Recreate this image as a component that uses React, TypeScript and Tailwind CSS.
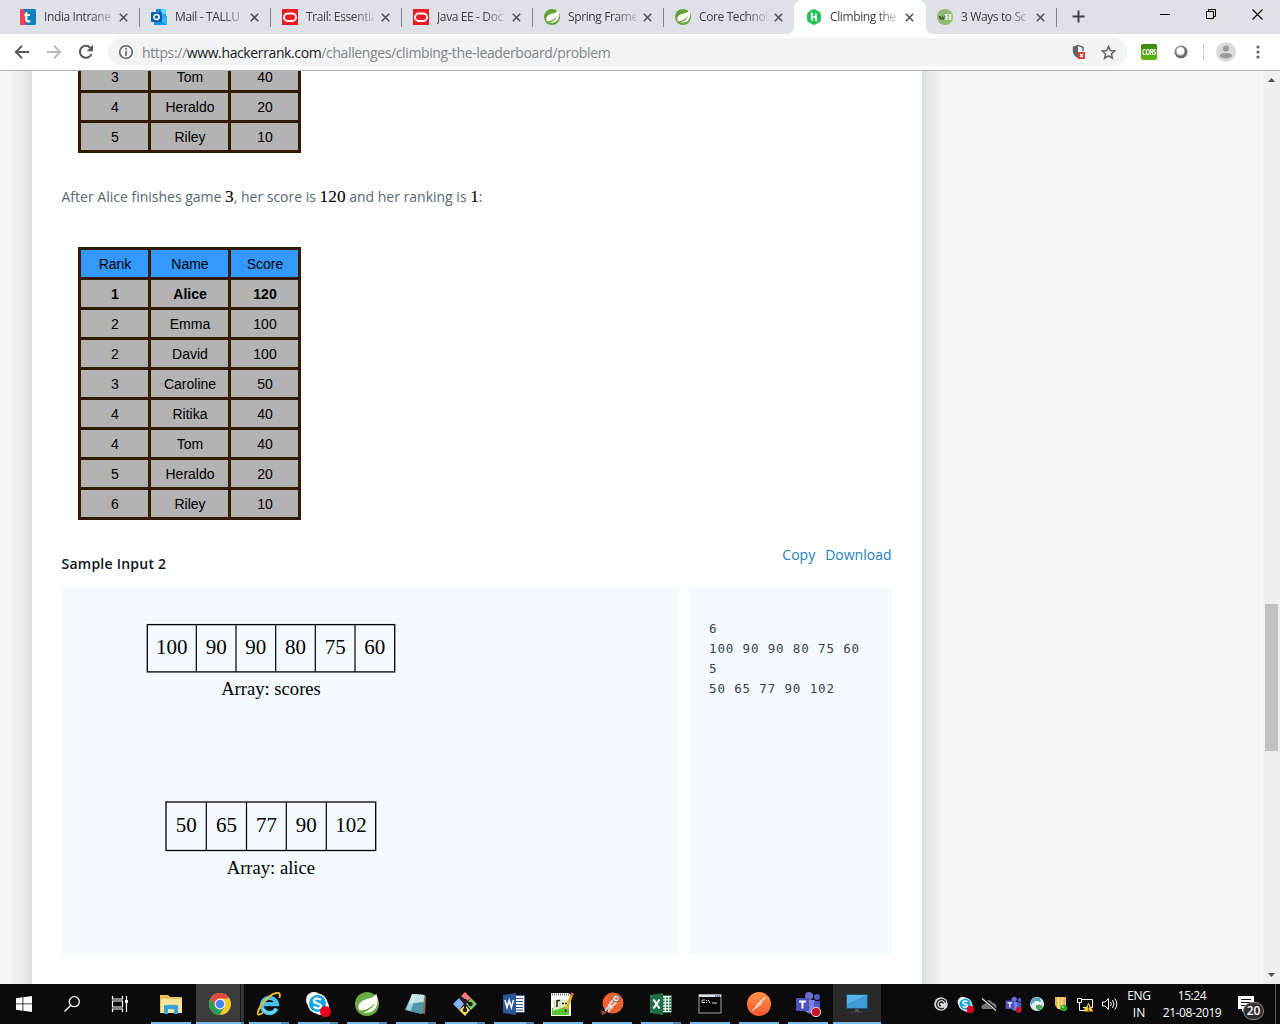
import React from "react";

function TealIcon() {
  return (
    <svg width="16" height="16" viewBox="0 0 16 16">
      <rect width="16" height="16" rx="1.5" fill="#0d7fba" />
      <path d="M0 1.500Q0 0 1.500 0H4L6 16H1.500Q0 16 0 14.500Z" fill="#f2405d" />
      <path d="M6.300 3.300V10.300Q6.300 12.300 8.300 12.300H10.300M4.500 6H10" stroke="#fff" strokeWidth="2.200" fill="none" />
    </svg>
  );
}

function OutlookIcon() {
  return (
    <svg width="17" height="16" viewBox="0 0 17 16">
      <path d="M5 0H15V10H5Z" fill="#28a8ea" />
      <path d="M10 0H15V5H10Z" fill="#50d9ff" />
      <path d="M5 0H10V5H5Z" fill="#1487d6" />
      <path d="M5 5H10V10H5Z" fill="#0364b8" />
      <path d="M3 8L10 12L16 7V16H3Z" fill="#1490df" />
      <path d="M16 7V16L8 11.500Z" fill="#35b8f1" />
      <rect x="0" y="3" width="11" height="10" rx="1" fill="#0a5fb4" />
      <circle cx="5.500" cy="8" r="2.500" fill="none" stroke="#fff" strokeWidth="1.700" />
    </svg>
  );
}

function OracleIcon() {
  return (
    <svg width="16" height="16" viewBox="0 0 16 16">
      <rect width="16" height="16" fill="#ee1c25" />
      <rect x="2" y="4.500" width="12" height="7.500" rx="3.700" fill="none" stroke="#fff" strokeWidth="1.900" />
    </svg>
  );
}

function SpringLeaf({ size, color }: { size: number; color: string }) {
  return (
    <svg width={size} height={size} viewBox="0 0 24 24" className="shrink-0">
      <circle cx="12" cy="12" r="12" fill={color} />
      <path d="M21.300 1.800C17.500 7.500 12 6 7.500 8.800C2.800 11.700 2.500 16.500 5 19.300C10 21.500 17 21.500 20.500 16.300C23.500 11.600 22.800 6.200 21.300 1.800Z" fill="#fff" />
      <path d="M3.800 18.800C10.500 18.500 16.500 15.500 20 10.200C18 16.300 11.800 20.300 5.800 20.400Z" fill={color} />
      <circle cx="4.800" cy="19.500" r="1.300" fill={color} />
    </svg>
  );
}

function SpringTabIcon() {
  return <SpringLeaf size={16} color="#62a237" />;
}

function HackerIcon() {
  return (
    <svg width="16" height="16" viewBox="0 0 16 16">
      <path d="M8 0Q8.800 0 14 3.200Q15 3.900 15 8T14 12.800Q8.800 16 8 16T2 12.800Q1 12.100 1 8T2 3.200Q7.200 0 8 0Z" fill="#27c15a" />
      <path d="M6 4V11.500M10 4.500V12M6 8H10M4.800 4.700H6M10 11.300H11.200" stroke="#fff" strokeWidth="1.700" fill="none" />
    </svg>
  );
}

function WikiIcon() {
  return (
    <span className="flex size-4 items-center justify-center rounded-full bg-[#93b874] font-['Liberation_Serif',serif] text-[9px] font-bold leading-none tracking-[-0.5px]">
      <span className="text-[#2e3d22]">w</span>
      <span className="text-white">H</span>
    </span>
  );
}

const tabs = [
  { title: "India Intrane", Icon: TealIcon },
  { title: "Mail - TALLU", Icon: OutlookIcon },
  { title: "Trail: Essentia", Icon: OracleIcon },
  { title: "Java EE - Doc", Icon: OracleIcon },
  { title: "Spring Frame", Icon: SpringTabIcon },
  { title: "Core Technol", Icon: SpringTabIcon },
  { title: "Climbing the", Icon: HackerIcon, active: true },
  { title: "3 Ways to Sc", Icon: WikiIcon },
];

function Tab({ tab, line }: { tab: (typeof tabs)[number]; line: boolean }) {
  const { title, Icon, active } = tab;
  return (
    <div
      className={
        active
          ? "relative -ml-px flex h-[34px] w-[132px] items-center rounded-t-lg bg-white pl-3"
          : "relative flex h-[34px] w-[131px] items-center pl-[11px]"
      }
    >
      {active && (
        <>
          <svg className="absolute -left-2 bottom-0" width="8" height="8"><path d="M8 0V8H0Q8 8 8 0Z" fill="#fff" /></svg>
          <svg className="absolute -right-2 bottom-0" width="8" height="8"><path d="M0 0V8H8Q0 8 0 0Z" fill="#fff" /></svg>
        </>
      )}
      <span className="flex w-[24px] shrink-0"><Icon /></span>
      <span className="w-[68px] shrink-0 whitespace-nowrap text-[12px] tracking-[-0.38px] text-[#3c4043] [mask-image:linear-gradient(to_right,#000_68%,#0003)]">
        {title}
      </span>
      <svg className="ml-[7px] shrink-0" width="9" height="9" viewBox="0 0 9 9">
        <path d="M0.800 0.800L8.200 8.200M8.200 0.800L0.800 8.200" stroke="#505458" strokeWidth="1.600" />
      </svg>
      {line && <span className="absolute right-0 top-[8px] h-[19px] w-px bg-[#808387]" />}
    </div>
  );
}

function TabStrip() {
  return (
    <div className="flex h-[34px] bg-[#dee1e6] pl-[9px]">
      {tabs.map((t, i) => (
        <Tab key={t.title} tab={t} line={i < 5 || i === 7} />
      ))}
      <svg className="ml-[15px] mt-[10px]" width="13" height="13" viewBox="0 0 13 13">
        <path d="M6.500 0.500V12.500M0.500 6.500H12.500" stroke="#3c4043" strokeWidth="2" />
      </svg>
      <div className="ml-auto flex items-start pr-[17px] pt-[9px]">
        <svg width="10" height="10" className="mr-[36px]"><path d="M0 5.500H10" stroke="#000" /></svg>
        <svg width="10" height="10" className="mr-[36px]">
          <path d="M0.500 2.500H7.500V9.500H0.500ZM2.500 2.500V0.500H9.500V7.500H7.500" fill="none" stroke="#000" />
        </svg>
        <svg width="11" height="11"><path d="M0.500 0.500L10.500 10.500M10.500 0.500L0.500 10.500" stroke="#000" strokeWidth="1.100" /></svg>
      </div>
    </div>
  );
}

function Toolbar() {
  return (
    <div className="flex h-[37px] items-center border-b border-[#b6b4b6] bg-white pl-[14px]">
      <svg width="16" height="16" viewBox="0 0 16 16" fill="none" stroke="#54585d" strokeWidth="1.900">
        <path d="M15 8H2.500M8 1.800L1.800 8L8 14.200" />
      </svg>
      <svg className="ml-[16px]" width="16" height="16" viewBox="0 0 16 16" fill="none" stroke="#babcbe" strokeWidth="1.900">
        <path d="M1 8H13.500M8 1.800L14.200 8L8 14.200" />
      </svg>
      <svg className="ml-[16px]" width="16" height="16" viewBox="0 0 16 16">
        <path d="M13.500 10A6 6 0 1 1 12.400 3.800" fill="none" stroke="#54585d" strokeWidth="2" />
        <path d="M15 0.800V7.200H8.600Z" fill="#54585d" />
      </svg>
      <div className="ml-[14px] flex h-7 w-[1019px] items-center rounded-full bg-[#f1f3f4] pl-[10px]">
        <svg width="16" height="16" viewBox="0 0 16 16" fill="none" stroke="#5f6368" strokeWidth="1.600">
          <circle cx="8" cy="8" r="6.300" />
          <path d="M8 7V12M8 4V5.700" />
        </svg>
        <span className="ml-[8px] whitespace-nowrap text-[14px] tracking-[-0.38px] text-[#80868b]">
          https://<span className="text-[#202124]">www.hackerrank.com</span>/challenges/climbing-the-leaderboard/problem
        </span>
        <svg className="ml-auto" width="15" height="16" viewBox="0 0 15 16">
          <path d="M6 0.800L0.800 2.700V7Q0.800 11.500 6 14Z" fill="#5f6368" />
          <path d="M6 1.300L11 3.300V7" fill="none" stroke="#5f6368" strokeWidth="1.400" />
          <rect x="6" y="8" width="7" height="7" fill="#dd3b31" />
          <path d="M8 10L11 13M11 10L8 13" stroke="#fff" strokeWidth="1.200" />
        </svg>
        <svg className="ml-[14px] mr-[11px]" width="15" height="15" viewBox="0 0 15 15">
          <path d="M7.500 1.500L9.300 5.600L13.700 6L10.400 8.900L11.400 13.200L7.500 10.900L3.600 13.200L4.600 8.900L1.300 6L5.700 5.600Z" fill="none" stroke="#5f6368" strokeWidth="1.500" />
        </svg>
      </div>
      <span className="ml-[14px] flex size-4 items-center justify-center rounded-[2px] bg-[linear-gradient(#39850d,#5db80b)] text-[6px] font-bold leading-none tracking-[-0.5px] text-white">
        <span className="scale-y-[1.4]">CORS</span>
      </span>
      <svg className="ml-[17px]" width="14" height="14" viewBox="0 0 14 14">
        <circle cx="7" cy="7" r="6.500" fill="#6a6a6a" />
        <circle cx="6.200" cy="6" r="4.900" fill="#a9a9a9" />
        <circle cx="6.500" cy="6" r="3.700" fill="#fff" />
      </svg>
      <span className="ml-[15px] h-4 w-px bg-[#cfd1d4]" />
      <svg className="ml-[12px]" width="20" height="20" viewBox="0 0 20 20">
        <circle cx="10" cy="10" r="10" fill="#dadada" />
        <circle cx="10" cy="6.500" r="3" fill="#9b9b9b" />
        <path d="M4 13.500Q4 11 10 11T16 13.500V14.500Q13 16.500 10 16.500T4 14.500Z" fill="#9b9b9b" />
      </svg>
      <svg className="ml-[20px]" width="4" height="14" viewBox="0 0 4 14" fill="#5f6368">
        <circle cx="2" cy="2" r="1.600" /><circle cx="2" cy="7" r="1.600" /><circle cx="2" cy="12" r="1.600" />
      </svg>
    </div>
  );
}

type Row = [string, string, string];
const before: Row[] = [["3", "Tom", "40"], ["4", "Heraldo", "20"], ["5", "Riley", "10"]];
const after: Row[] = [
  ["Rank", "Name", "Score"],
  ["1", "Alice", "120"],
  ["2", "Emma", "100"],
  ["2", "David", "100"],
  ["3", "Caroline", "50"],
  ["4", "Ritika", "40"],
  ["4", "Tom", "40"],
  ["5", "Heraldo", "20"],
  ["6", "Riley", "10"],
];

function Board({ rows }: { rows: Row[] }) {
  return (
    <div className="ml-[46px] grid w-[223px] grid-cols-[67px_77px_67px] gap-[3px] bg-[#331a00] p-[3px] font-['Liberation_Sans',sans-serif] text-[14px] text-black">
      {rows.map((r) =>
        r.map((c, j) => (
          <div
            key={r.join() + j}
            className={
              r[0] === "Rank"
                ? "h-[27px] bg-[#3399ff] pl-px text-center leading-[28px]"
                : r[1] === "Alice"
                  ? "h-[27px] bg-[#b3b3b3] pl-px text-center font-bold leading-[28px]"
                  : "h-[27px] bg-[#b3b3b3] pl-px text-center leading-[28px]"
            }
          >
            {c}
          </div>
        )),
      )}
    </div>
  );
}

function Num({ children }: { children: string }) {
  return (
    <span className="font-['Liberation_Serif',serif] text-[17.3px] leading-none text-black [-webkit-text-stroke:0.1px_#000]">{children}</span>
  );
}

function ArrayFigure({ x, y, edges, height, values, label, labelY }: {
  x: number; y: number; edges: number[]; height: number; values: string[]; label: string; labelY: number;
}) {
  const right = edges[edges.length - 1];
  return (
    <g>
      <rect x={x} y={y} width={right - x} height={height} fill="none" stroke="#000" strokeWidth="1.300" />
      {values.map((v, i) => {
        const left = i === 0 ? x : edges[i - 1];
        return (
          <g key={i}>
            {i > 0 && <path d={`M${left} ${y}V${y + height}`} stroke="#000" strokeWidth="1.200" />}
            <text x={(left + edges[i]) / 2} y={y + 29.500} fontSize="21" textAnchor="middle">{v}</text>
          </g>
        );
      })}
      <text x={(x + right) / 2} y={labelY} fontSize="18.600" textAnchor="middle">{label}</text>
    </g>
  );
}

function Page() {
  return (
    <div className="flex h-[913px] overflow-hidden bg-[#f3f7f8]">
      <div className="w-8 shrink-0 bg-[linear-gradient(to_right,#f3f7f8_30%,#e9eded_65%,#dbdfdf)]" />
      <main className="w-[890px] shrink-0 bg-white">
        <div className="-mt-[11px]"><Board rows={before} /></div>
        <p className="ml-[29.5px] mt-[33px] flex h-[22px] items-baseline whitespace-pre text-[14px] leading-[22px] text-[#576871]">
          <span>After Alice finishes game <Num>3</Num>, her score is <Num>120</Num> and her ranking is <Num>1</Num>:</span>
        </p>
        <div className="mt-[39px]"><Board rows={after} /></div>
        <div className="mt-[24px] flex h-[44px] justify-between pl-[29.5px] pr-[30.5px] text-[14px] leading-[22px]">
          <h3 className="mt-[9px] font-semibold tracking-[0.24px] text-[#0e141e]">Sample Input 2</h3>
          <div className="flex gap-[10px] text-[#1b7fbd]">
            <span>Copy</span>
            <span>Download</span>
          </div>
        </div>
        <div className="flex h-[367px] gap-[10px] pl-[30px]">
          <div className="w-[617px] bg-[#f4faff]">
            <svg width="617" height="367" viewBox="62 588 617 367" fontFamily="Liberation Serif, serif">
              <ArrayFigure x={147.300} y={624.600} height={47.300} edges={[196.300, 236, 275.700, 315.300, 355, 394.700]} values={["100", "90", "90", "80", "75", "60"]} label="Array: scores" labelY={695} />
              <ArrayFigure x={166} y={802} height={48.500} edges={[206.300, 246.500, 286.300, 326.300, 375.700]} values={["50", "65", "77", "90", "102"]} label="Array: alice" labelY={874} />
            </svg>
          </div>
          <pre className="w-[203px] bg-[#f4faff] pl-[20px] pt-[31px] font-['DejaVu_Sans_Mono',monospace] text-[12.5px] leading-[20px] tracking-[0.86px] text-[#39424e]">
            {"6\n100 90 90 80 75 60\n5\n50 65 77 90 102"}
          </pre>
        </div>
      </main>
      <div className="w-[32px] shrink-0 bg-[linear-gradient(to_left,#f3f7f8_30%,#e9eded_65%,#dbdfdf)]" />
      <div className="ml-auto flex w-[17px] flex-col items-center bg-[#f0f0f0]">
        <svg className="mt-[6px]" width="7" height="5"><path d="M0 5L3.500 1L7 5Z" fill="#505050" /></svg>
        <div className="mt-[522px] h-[147px] w-[13px] bg-[#c1c1c1]" />
        <svg className="mb-[6px] mt-auto" width="7" height="5"><path d="M0 0L3.500 4L7 0Z" fill="#505050" /></svg>
      </div>
    </div>
  );
}

function Explorer() {
  return (
    <svg width="24" height="24" viewBox="0 0 24 24">
      <path d="M1 3H9L11 5H23V21H1Z" fill="#e8bf5b" />
      <path d="M2 7H23V21H2Z" fill="#fde29a" />
      <path d="M5 22V14Q5 13 6 13H18Q19 13 19 14V22H15V17H9V22Z" fill="#35a4df" />
    </svg>
  );
}
function ChromeIcon() {
  return (
    <svg width="24" height="24" viewBox="0 0 24 24">
      <circle cx="12" cy="12" r="11" fill="#f6c92f" />
      <path d="M2.500 6.500A11 11 0 0 1 21.500 6.500H12L7.300 14.700Z" fill="#dc4b3d" />
      <path d="M2.500 6.500L7.300 14.700L12 17.500L16.500 15L11.700 23A11 11 0 0 1 2.500 6.500Z" fill="#279b58" />
      <circle cx="12" cy="12" r="5.400" fill="#f5f5f5" />
      <circle cx="12" cy="12" r="4.200" fill="#4584ee" />
    </svg>
  );
}
function Ie() {
  return (
    <svg width="26" height="26" viewBox="0 0 26 26">
      <path d="M20.500 17.500A7.600 7.600 0 1 1 21 13.200H8" fill="none" stroke="#49bff0" strokeWidth="4.300" />
      <path d="M20 17.500A7.300 7.300 0 0 1 6.500 17" fill="none" stroke="#8ae2fa" strokeWidth="1.300" />
      <path d="M7 21.500Q1 26 2 21C4 13 15 2 21 2Q25 1 23.500 7" fill="none" stroke="#efba28" strokeWidth="1.900" />
    </svg>
  );
}
function SkypeIcon({ size = 26 }: { size?: number }) {
  return (
    <svg width={size} height={size} viewBox="0 0 26 26">
      <circle cx="9" cy="9" r="8" fill="#fff" /><circle cx="16" cy="16" r="8" fill="#fff" /><circle cx="12.500" cy="12.500" r="10" fill="#fff" />
      <circle cx="12.500" cy="12.500" r="8.500" fill="#12a5e4" />
      <path d="M16 9C13 6.500 8.800 7.500 9 10.200C9.200 13 16.200 12 16 15C15.800 18 11 18 8.800 15.500" fill="none" stroke="#fff" strokeWidth="2.300" />
      <circle cx="20.500" cy="20.500" r="5.500" fill="#e8001f" />
    </svg>
  );
}
function SpringTask() {
  return <SpringLeaf size={24} color="#68ad3f" />;
}
function NotepadIcon() {
  return (
    <svg width="24" height="24" viewBox="0 0 24 24">
      <path d="M9 3L22 4L21 22L17 21Z" fill="#8b7454" />
      <path d="M8 2L20.500 3L18 22L1 18Z" fill="#66aebb" />
      <path d="M8 2L20.500 3L19.500 10L5 12Z" fill="#c0e3e8" />
      <path d="M5 12L19.500 10L18 22L1 18Z" fill="#4f99a9" />
      <path d="M2 17L8 4H11L7 19Z" fill="#dceff1" opacity="0.600" />
      <path d="M8 2.500L20 3.500" stroke="#eee" strokeDasharray="1 1" />
    </svg>
  );
}
function GitIcon() {
  return (
    <svg width="24" height="24" viewBox="0 0 24 24">
      <path d="M12 0L18 6L12 11L7 5Z" fill="#f17b78" />
      <path d="M18 6L24 12L18 18L13 12Z" fill="#7fc866" />
      <path d="M6 6L11 12L6 18L0 12Z" fill="#82b3fa" />
      <path d="M12 13L17 18L12 24L6 18Z" fill="#fbdc6e" />
      <path d="M7.500 4.500L12 9V18M12 9L18 12" stroke="#222" strokeWidth="2" fill="none" />
      <circle cx="12" cy="9" r="2.200" fill="#222" /><circle cx="12" cy="18" r="2.200" fill="#222" /><circle cx="17.500" cy="12" r="2.200" fill="#222" />
    </svg>
  );
}
function OfficeIcon({ excel }: { excel?: boolean }) {
  const c = excel ? "#1e7145" : "#2b579a";
  return (
    <svg width="24" height="24" viewBox="0 0 24 24">
      <rect x="12" y="3.500" width="10.500" height="17" fill="#fff" stroke={c} strokeWidth="0.800" />
      {excel ? (
        <path d="M14.500 5.500V19M18 5.500V19M21 5.500V19" stroke={c} strokeWidth="2.200" strokeDasharray="1.800 1.200" />
      ) : (
        <path d="M14 6.500H21M14 9.500H21M14 12.500H21M14 15.500H21M14 18H21" stroke={c} strokeWidth="1.200" />
      )}
      <path d="M1 3L14 1V23L1 21Z" fill={c} />
      {excel ? (
        <path d="M4.500 7.500L10.500 16.500M10.500 7.500L4.500 16.500" stroke="#fff" strokeWidth="2.100" />
      ) : (
        <path d="M3 8L5 15.500L7.200 8.500L9.300 15.500L11.500 8" stroke="#fff" strokeWidth="1.600" fill="none" />
      )}
    </svg>
  );
}
function NppIcon() {
  return (
    <svg width="24" height="24" viewBox="0 0 24 24">
      <path d="M0 1H18L20 4V24H0Z" fill="#fbfbfb" />
      <path d="M1 16L18 13V23H1Z" fill="#5ac42f" /><path d="M2 8H17V14L2 19Z" fill="#d7ebbc" />
      <path d="M1 2.500H18" stroke="#777" strokeWidth="2" strokeDasharray="1 1" />
      <path d="M6 8V15M6 8.500H9M11 11.500H13M14 11.500H16" stroke="#222" strokeWidth="1.500" />
      <path d="M15 18L21 2" stroke="#ecad22" strokeWidth="3" /><path d="M20.500 4L21.700 1" stroke="#d05b47" strokeWidth="3" /><path d="M14.500 20L15 17" stroke="#222" strokeWidth="1.500" />
    </svg>
  );
}
function PostmanOld() {
  return (
    <svg width="24" height="24" viewBox="0 0 24 24">
      <path d="M1 18L7 21L2 23Z" fill="#c8451c" />
      <circle cx="13" cy="11" r="10.500" fill="#ef6131" />
      <path d="M5 19L11 12M8 20L12 14L16 11L13 8L9 13L13 16" stroke="#e5dbd3" strokeWidth="2" fill="none" />
      <path d="M3 22L8 18" stroke="#555" strokeWidth="1.500" />
      <circle cx="16" cy="6.500" r="3.400" fill="#eee" stroke="#77574a" /><circle cx="16.500" cy="6.500" r="1.500" fill="#dc7652" />
    </svg>
  );
}
function CmdIcon() {
  return (
    <svg width="24" height="24" viewBox="0 0 24 24">
      <rect x="1" y="2.500" width="22" height="18.500" fill="#050505" stroke="#a5a5a5" />
      <path d="M1 4H23" stroke="#ddd" strokeWidth="2" /><path d="M17 4H22" stroke="#526a86" strokeWidth="1.500" strokeDasharray="1.500 0.500" />
      <path d="M7 8H5Q4 8 4 9V10.500H7M8.500 8V9M8.500 10V11M10 8L12 11M14 11H19" stroke="#ddd" fill="none" />
    </svg>
  );
}
function PostmanTask() {
  return (
    <svg width="24" height="24" viewBox="0 0 24 24">
      <defs><linearGradient id="pm" x2="0" y2="1"><stop stopColor="#ff9344" /><stop offset="1" stopColor="#ff5634" /></linearGradient></defs>
      <circle cx="12" cy="12" r="12" fill="url(#pm)" />
      <path d="M7 17L11 11.500L16 8L14 13L9.500 16Z" fill="#ffe4d7" />
      <path d="M10 13L18.500 5.500" stroke="#fff" strokeWidth="1.400" /><path d="M10 14L16 9" stroke="#d86b48" strokeWidth="0.700" />
      <path d="M5 19L10 14.500" stroke="#fff" />
    </svg>
  );
}
function TeamsIcon({ size = 26 }: { size?: number }) {
  return (
    <svg width={size} height={size} viewBox="0 0 26 26">
      <circle cx="14" cy="5" r="4" fill="#686fd0" /><circle cx="22" cy="6" r="3" fill="#5059c9" />
      <path d="M9 9H20V20Q16 25 10 20Z" fill="#7b83eb" /><path d="M19 10H25V17Q24 21 19 20Z" fill="#5059c9" />
      <rect x="1" y="7" width="13" height="13" rx="1" fill="#4b53bc" />
      <path d="M4 10.500H11M7.500 10.500V17.500" stroke="#fff" strokeWidth="2" />
      <circle cx="21" cy="21" r="4.700" fill="#c4162e" stroke="#f3d5da" strokeWidth={size > 20 ? 1 : 0} />
    </svg>
  );
}
function MonitorIcon() {
  return (
    <svg width="24" height="24" viewBox="0 0 24 24">
      <path d="M10 17H14V19.500H17V20.500H7V19.500H10Z" fill="#4a5258" />
      <rect x="1.500" y="2.500" width="21" height="14" fill="#3f9bd6" stroke="#22516e" />
      <path d="M2 3H22L2 12Z" fill="#55b1e6" />
    </svg>
  );
}

const tasks: { Icon: React.ComponentType; group?: boolean; tone?: "chrome" | "remote" }[] = [
  { Icon: Explorer },
  { Icon: ChromeIcon, tone: "chrome" },
  { Icon: Ie, group: true },
  { Icon: SkypeIcon, group: true },
  { Icon: SpringTask, group: true },
  { Icon: NotepadIcon, group: true },
  { Icon: GitIcon, group: true },
  { Icon: () => <OfficeIcon />, group: true },
  { Icon: NppIcon },
  { Icon: PostmanOld },
  { Icon: () => <OfficeIcon excel />, group: true },
  { Icon: CmdIcon },
  { Icon: PostmanTask },
  { Icon: TeamsIcon },
  { Icon: MonitorIcon, tone: "remote" },
];

function Tray() {
  return (
    <div className="flex items-center gap-[8px]">
      <svg width="16" height="16" viewBox="0 0 16 16">
        <circle cx="8" cy="8" r="6.800" fill="#d9d9d9" />
        <path d="M12.800 6.500A4.700 4.700 0 1 0 11 12M10.300 7.500A2 2 0 1 0 8 10" fill="none" stroke="#222" strokeWidth="1.400" />
      </svg>
      <SkypeIcon size={17} />
      <svg className="-ml-px" width="16" height="16" viewBox="0 0 16 16">
        <path d="M1 13Q-1 9 4 8Q6 2 10 5Q11 7 13 7Q17 9 15 13Z" fill="#777" />
        <path d="M1 2L15 14" stroke="#111" strokeWidth="2.500" /><path d="M1 2.500L15 14.500" stroke="#ddd" strokeWidth="1.100" />
      </svg>
      <TeamsIcon size={17} />
      <svg className="-ml-px" width="16" height="16" viewBox="0 0 16 16">
        <circle cx="8" cy="8" r="7" fill="#dce9ee" />
        <path d="M1 6Q5 0 11 2L12 6L6 5L2 9Z" fill="#5aa2bc" /><path d="M7 8L12 9L14 11L10 15L7 12Z" fill="#55a24e" /><circle cx="8" cy="7" r="2" fill="#fff" />
      </svg>
      <svg width="16" height="16" viewBox="0 0 16 16">
        <path d="M2 1H13V9L8 14L4 12L2 9Z" fill="#e6b64b" /><path d="M5.500 1V13M9 1V12" stroke="#fbe7a6" strokeWidth="1.500" />
        <circle cx="11" cy="12" r="3.300" fill="#2ba42f" /><circle cx="10" cy="11" r="1" fill="#9ce48e" />
      </svg>
      <svg width="18" height="16" viewBox="0 0 18 16" className="-mr-px -ml-px">
        <path d="M5 3.500H16.500V11.500H7M1.500 2.500H5.500V6.500H1.500ZM3.500 6.500V14.500H9M9 11V15" stroke="#fff" fill="none" />
        <path d="M12.500 6.500L17.300 15.500H7.700Z" fill="#ffc52e" /><path d="M12.500 9V12.500M12.500 13.500V14.700" stroke="#222" strokeWidth="1.200" />
      </svg>
      <svg width="18" height="16" viewBox="0 0 18 16" fill="none" stroke="#fff">
        <path d="M1.500 6H4L7.500 2.500V13.500L4 10H1.500ZM9.500 6Q11 8 9.500 10M11.500 4Q14.500 8 11.500 12M13.800 2.500Q18 8 13.800 13.500" />
      </svg>
    </div>
  );
}

function Taskbar() {
  return (
    <div className="flex h-[40px] items-center bg-[#0b0b0b] text-white">
      <div className="flex w-[147px] shrink-0 items-center pl-4">
        <svg width="16" height="16" viewBox="0 0 16 16" fill="#fff">
          <path d="M0 2.300L6.500 1.300V7.500H0ZM7.300 1.200L16 0V7.500H7.300ZM0 8.300H6.500V14.700L0 13.700ZM7.300 8.300H16V16L7.300 14.800Z" />
        </svg>
        <svg className="ml-8" width="16" height="16" viewBox="0 0 16 16" fill="none" stroke="#fff" strokeWidth="1.300">
          <circle cx="10.300" cy="5.700" r="5" /><path d="M6.800 9.200L0.500 15.500" />
        </svg>
        <svg className="ml-[31px]" width="18" height="16" viewBox="0 0 18 16" fill="none" stroke="#fff">
          <path d="M1.500 0V3H11.500V0M1.500 16V13H11.500V16M1.500 5H11.500V11H1.500ZM15.500 0V16" strokeWidth="1.200" />
          <path d="M14 5.500H17" strokeWidth="3" />
        </svg>
      </div>
      <div className="flex h-10 shrink-0 gap-px">
        {tasks.map(({ Icon, group, tone }, i) => (
          <div
            key={i}
            className={
              tone === "chrome"
                ? "relative flex w-12 items-center justify-center bg-[#3c3c3c]"
                : tone === "remote"
                  ? "relative flex w-12 items-center justify-center bg-[#292929]"
                  : "relative flex w-12 items-center justify-center"
            }
          >
            <Icon />
            {tone === "chrome" && <span className="absolute right-0 top-0 h-10 w-1 border-l border-[#151515] bg-[#353535]" />}
            <span className={tone ? "absolute inset-x-0 bottom-0 h-[2px] bg-[#76b9ed]" : "absolute inset-x-1 bottom-0 h-[2px] bg-[#76b9ed]"} />
            {group && <span className="absolute bottom-0 right-1 h-[2px] w-2 bg-[#5584a8]" />}
            {tone === "chrome" && <span className="absolute bottom-0 right-0 h-[2px] w-[3px] bg-[#5584a8]" />}
          </div>
        ))}
      </div>
      <div className="ml-auto flex h-10 items-center">
        <Tray />
        <div className="ml-[8px] w-[24px] text-center text-[12px] leading-[17px]">
          <div className="-mx-1 tracking-[-0.3px]">ENG</div>
          <div>IN</div>
        </div>
        <div className="ml-[9px] w-[64px] whitespace-nowrap text-center text-[12px] leading-[17px] tracking-[-0.4px]">
          <div>15:24</div>
          <div className="-mx-1">21-08-2019</div>
        </div>
        <div className="relative ml-[14px] h-10 w-[29px]">
          <svg className="absolute left-0 top-[11px]" width="18" height="18" viewBox="0 0 18 18">
            <path d="M0 1H16V14H7L4 17V14H0Z" fill="#fff" /><path d="M3 4.500H13M3 7.500H13M3 10.500H13" stroke="#111" />
          </svg>
          <span className="absolute left-[5px] top-[18px] flex h-[18px] w-[21px] items-center justify-center rounded-full border border-[#888] bg-[#303030] text-[12px] font-semibold leading-none">20</span>
        </div>
        <span className="ml-[8px] mr-1 h-10 w-px bg-[#5a5a5a]" />
      </div>
    </div>
  );
}

export default function App() {
  return (
    <div className="h-[1024px] w-[1280px] overflow-hidden bg-white font-['Open_Sans',sans-serif]">
      <TabStrip />
      <Toolbar />
      <Page />
      <Taskbar />
    </div>
  );
}
